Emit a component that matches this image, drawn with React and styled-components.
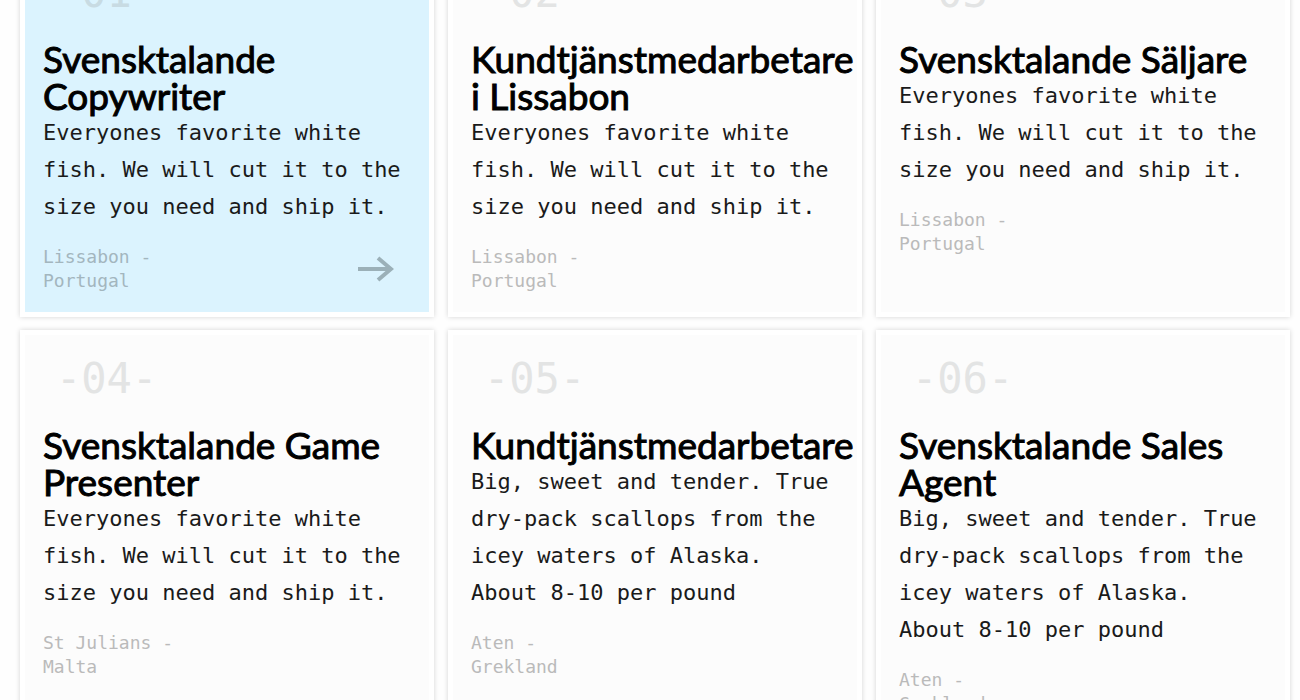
import React from "react";
import styled, { createGlobalStyle } from "styled-components";

const GlobalStyle = createGlobalStyle`
  * { box-sizing: border-box; }
  body { margin: 0; background: #fefefe; overflow: hidden; }
`;

const Grid = styled.main`
  display: grid;
  grid-template-columns: repeat(3, minmax(0, 1fr));
  gap: 13px 14px;
  margin-top: -56px;
  padding: 0 10px 0 20px;
  font-family: "DejaVu Sans Mono", "Liberation Mono", monospace;
`;

const Card = styled.article`
  padding: 20px 18px 19px 18px;
  border: 5px solid #fff;
  background: ${(p) => (p.$active ? "#dbf3fe" : "#fcfcfc")};
  box-shadow: 0 0 5px rgba(0, 0, 0, 0.17);
`;

const Number = styled.div`
  padding-left: 13px;
  margin-bottom: 23px;
  color: ${(p) => (p.$active ? "#c8dbe3" : "#e3e4e4")};
  font-size: 42px;
  line-height: 48px;
`;

const Title = styled.h2`
  margin: 0;
  color: #000;
  font-family: Lato, sans-serif;
  font-size: 37px;
  font-weight: 400;
  line-height: 37px;
  -webkit-text-stroke: 1px #000;
`;

const Description = styled.p`
  margin: 0 0 20px;
  color: #1a1a1a;
  font-size: 22px;
  line-height: 37px;
`;

const Footer = styled.footer`
  display: flex;
  align-items: center;
  justify-content: space-between;
  padding-right: 17px;
`;

const Place = styled.span`
  width: 40%;
  color: ${(p) => (p.$active ? "#a3b6be" : "#bababa")};
  font-size: 18px;
  line-height: 24px;
`;

const Arrow = styled.svg`
  width: 36px;
  height: 26px;
  fill: none;
  stroke: #9bb0b8;
  stroke-width: 4;
`;

const FISH =
  "Everyones favorite white fish. We will cut it to the size you need and ship it.";
const SCALLOPS =
  "Big, sweet and tender. True dry-pack scallops from the icey waters of Alaska. About 8-10 per pound";

const jobs = [
  { id: "01", title: "Svensktalande Copywriter", text: FISH, place: "Lissabon - Portugal", active: true },
  { id: "02", title: "Kundtjänstmedarbetare i Lissabon", text: FISH, place: "Lissabon - Portugal" },
  { id: "03", title: "Svensktalande Säljare", text: FISH, place: "Lissabon - Portugal" },
  { id: "04", title: "Svensktalande Game Presenter", text: FISH, place: "St Julians - Malta" },
  { id: "05", title: "Kundtjänstmedarbetare", text: SCALLOPS, place: "Aten - Grekland" },
  { id: "06", title: "Svensktalande Sales Agent", text: SCALLOPS, place: "Aten - Grekland" },
];

export default function App() {
  return (
    <>
      <GlobalStyle />
      <Grid>
        {jobs.map((job) => (
          <Card key={job.id} $active={job.active}>
            <Number $active={job.active}>-{job.id}-</Number>
            <Title>{job.title}</Title>
            <Description>{job.text}</Description>
            <Footer>
              <Place $active={job.active}>{job.place}</Place>
              {job.active && (
                <Arrow viewBox="0 0 36 26" aria-hidden="true">
                  <path d="M0 13H33M20 2L33 13L20 24" />
                </Arrow>
              )}
            </Footer>
          </Card>
        ))}
      </Grid>
    </>
  );
}
